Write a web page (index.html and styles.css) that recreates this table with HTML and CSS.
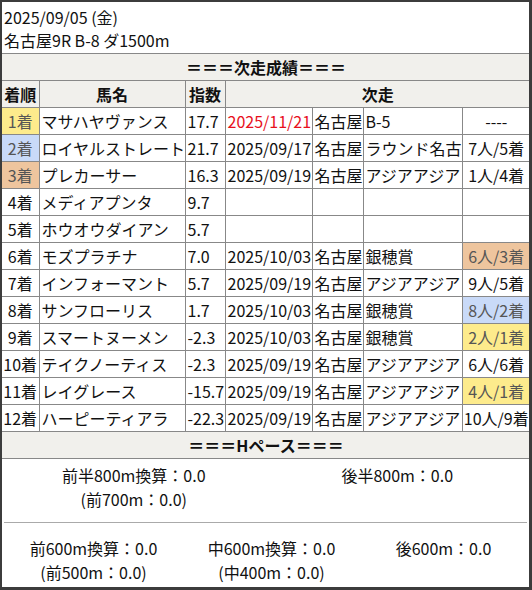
FILE: index.html
```html
<!DOCTYPE html>
<html lang="ja">
<head>
<meta charset="utf-8">
<link rel="stylesheet" href="styles.css">
</head>
<body>
<div class="frame">
  <div class="info">
    <div>2025/09/05 (金)</div>
    <div>名古屋9R B-8 ダ1500m</div>
  </div>
  <table class="results">
    <colgroup>
      <col class="c-rank"><col class="c-name"><col class="c-idx"><col class="c-date"><col class="c-venue"><col class="c-race"><col class="c-res">
    </colgroup>
    <tr><th colspan="7" class="sec">＝＝＝次走成績＝＝＝</th></tr>
    <tr><th>着順</th><th>馬名</th><th>指数</th><th colspan="4">次走</th></tr>
    <tr><td class="rank gold">1着</td><td>マサハヤヴァンス</td><td>17.7</td><td class="red">2025/11/21</td><td>名古屋</td><td>B-5</td><td class="res">----</td></tr>
    <tr><td class="rank silver">2着</td><td>ロイヤルストレート</td><td>21.7</td><td>2025/09/17</td><td>名古屋</td><td>ラウンド名古</td><td class="res">7人/5着</td></tr>
    <tr><td class="rank bronze">3着</td><td>プレカーサー</td><td>16.3</td><td>2025/09/19</td><td>名古屋</td><td>アジアアジア</td><td class="res">1人/4着</td></tr>
    <tr><td class="rank">4着</td><td>メディアプンタ</td><td>9.7</td><td></td><td></td><td></td><td class="res"></td></tr>
    <tr><td class="rank">5着</td><td>ホウオウダイアン</td><td>5.7</td><td></td><td></td><td></td><td class="res"></td></tr>
    <tr><td class="rank">6着</td><td>モズプラチナ</td><td>7.0</td><td>2025/10/03</td><td>名古屋</td><td>銀穂賞</td><td class="res bronze">6人/3着</td></tr>
    <tr><td class="rank">7着</td><td>インフォーマント</td><td>5.7</td><td>2025/09/19</td><td>名古屋</td><td>アジアアジア</td><td class="res">9人/5着</td></tr>
    <tr><td class="rank">8着</td><td>サンフローリス</td><td>1.7</td><td>2025/10/03</td><td>名古屋</td><td>銀穂賞</td><td class="res silver">8人/2着</td></tr>
    <tr><td class="rank">9着</td><td>スマートヌーメン</td><td>-2.3</td><td>2025/10/03</td><td>名古屋</td><td>銀穂賞</td><td class="res gold">2人/1着</td></tr>
    <tr><td class="rank">10着</td><td>テイクノーティス</td><td>-2.3</td><td>2025/09/19</td><td>名古屋</td><td>アジアアジア</td><td class="res">6人/6着</td></tr>
    <tr><td class="rank">11着</td><td>レイグレース</td><td>-15.7</td><td>2025/09/19</td><td>名古屋</td><td>アジアアジア</td><td class="res gold">4人/1着</td></tr>
    <tr><td class="rank">12着</td><td>ハーピーティアラ</td><td>-22.3</td><td>2025/09/19</td><td>名古屋</td><td>アジアアジア</td><td class="res">10人/9着</td></tr>
    <tr><th colspan="7" class="sec">＝＝＝Hペース＝＝＝</th></tr>
  </table>
  <div class="pace pace-half">
    <div class="pcell"><div>前半800m換算：0.0</div><div>(前700m：0.0)</div></div>
    <div class="pcell"><div>後半800m：0.0</div></div>
  </div>
  <div class="divider"></div>
  <div class="pace pace-third">
    <div class="pcell"><div>前600m換算：0.0</div><div>(前500m：0.0)</div></div>
    <div class="pcell"><div>中600m換算：0.0</div><div>(中400m：0.0)</div></div>
    <div class="pcell"><div>後600m：0.0</div></div>
  </div>
</div>
</body>
</html>
```

FILE: styles.css
```css
html, body {
  margin: 0;
  padding: 0;
}
body {
  background: #3c3c3c;
  width: 532px;
  height: 590px;
  overflow: hidden;
  font-family: "Noto Sans CJK JP", "Noto Sans", sans-serif;
  font-size: 16px;
  color: #111;
}
.frame {
  margin: 2px 2px 3px 2px;
  width: 527px;
  height: 585px;
  background: #fff;
  overflow: hidden;
}
.info {
  height: 47px;
  padding: 4px 2px 0 2px;
  line-height: 23px;
}
.results {
  border-collapse: collapse;
  table-layout: fixed;
  width: 528px;
}
.c-rank { width: 37px; }
.c-name { width: 146px; }
.c-idx { width: 40px; }
.c-date { width: 87px; }
.c-venue { width: 51px; }
.c-race { width: 99px; }
.c-res { width: 68px; }
.results th, .results td {
  border: 1px solid #888;
  height: 26px;
  padding: 0 0 0 2px;
  line-height: 26px;
  white-space: nowrap;
  overflow: hidden;
}
.results th {
  background: #f1f0ec;
  font-weight: bold;
  text-align: center;
  padding: 0;
}
.results td.rank, .results td.res {
  text-align: center;
  padding: 0;
}
.results tr > :first-child { border-left: none; }
.results tr > :last-child { border-right: none; }
.gold { background: #fdeb8c; color: #555; }
.silver { background: #c9daf8; color: #555; }
.bronze { background: #eec59e; color: #555; }
.red { color: #e8101c; }
.pace {
  display: grid;
  line-height: 24px;
}
.pace-half {
  grid-template-columns: 1fr 1fr;
  padding: 4px 0 11px 0;
}
.pace-third {
  grid-template-columns: 183px 173px 1fr;
  padding: 13px 0 4px 0;
}
.pcell {
  text-align: center;
}
.divider {
  height: 1px;
  margin: 0 2px;
  background: #aaa;
}
```
